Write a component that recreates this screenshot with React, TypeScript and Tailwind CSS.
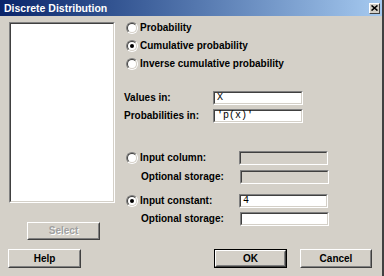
import React from 'react';

const FACE = 'bg-[#d4d0c8]';
const FONT = { fontFamily: '"Liberation Sans", Arial, sans-serif' };

function Sunken({ className = '', disabled = false, children }: { className?: string; disabled?: boolean; children?: React.ReactNode }) {
  return (
    <div className={`border border-t-[#808080] border-l-[#808080] border-b-white border-r-white ${className}`}>
      <div
        className={`h-full border border-t-[#404040] border-l-[#404040] border-b-[#d4d0c8] border-r-[#d4d0c8] ${disabled ? FACE : 'bg-white'} flex items-center pl-[2px] text-[10px] leading-none text-black`}
        style={{ fontFamily: '"Liberation Mono", "Courier New", monospace' }}
      >
        {children}
      </div>
    </div>
  );
}

function Button({ label, className = '', disabled = false, isDefault = false }: { label: string; className?: string; disabled?: boolean; isDefault?: boolean }) {
  const inner = (
    <div className="h-full border border-t-white border-l-white border-b-[#404040] border-r-[#404040]">
      <div className="h-full border border-t-[#d4d0c8] border-l-[#d4d0c8] border-b-[#808080] border-r-[#808080] flex items-center justify-center">
        <span
          className={`text-[10px] font-bold leading-none ${disabled ? 'text-[#a0a0a0] [text-shadow:1px_1px_0_#fff]' : 'text-black'}`}
          style={FONT}
        >
          {label}
        </span>
      </div>
    </div>
  );
  return isDefault ? <div className={`border border-black ${className}`}>{inner}</div> : <div className={className}>{inner}</div>;
}

function Radio({ checked = false }: { checked?: boolean }) {
  return (
    <div className="w-[12px] h-[12px] rounded-full border border-t-[#808080] border-l-[#808080] border-b-white border-r-white shrink-0">
      <div className="w-full h-full rounded-full border border-t-[#404040] border-l-[#404040] border-b-[#d4d0c8] border-r-[#d4d0c8] bg-white flex items-center justify-center">
        {checked && <div className="w-[4px] h-[4px] rounded-full bg-black" />}
      </div>
    </div>
  );
}

function Label({ children, className = '' }: { children: React.ReactNode; className?: string }) {
  return (
    <span className={`text-[10px] font-bold leading-none text-black whitespace-nowrap ${className}`} style={FONT}>
      {children}
    </span>
  );
}

export default function App() {
  return (
    <div className={`w-[384px] h-[276px] ${FACE} flex flex-col border-r-2 border-r-[#404040] overflow-hidden`}>
      {/* Title bar */}
      <div className="h-[16px] flex items-center justify-between bg-gradient-to-r from-[#0a246a] to-[#a6caf0] pl-[4px] pr-[2px] shrink-0">
        <span className="text-[10.5px] font-bold text-white leading-none" style={FONT}>
          Discrete Distribution
        </span>
        <div className={`w-[11px] h-[11px] ${FACE} border border-t-white border-l-white border-b-[#404040] border-r-[#404040] flex items-center justify-center`}>
          <svg width="7" height="6" viewBox="0 0 7 6">
            <path d="M0.5 0.5 L6.5 5.5 M6.5 0.5 L0.5 5.5" stroke="#000" strokeWidth="1.6" />
          </svg>
        </div>
      </div>

      <div className="flex pt-[3px]">
        {/* Left column */}
        <div className="flex flex-col pl-[9px] w-[126px]">
          <Sunken className="w-[106px] h-[181px] mt-[3px]" />
          <Button label="Select" disabled className="w-[73px] h-[18px] ml-[18px] mt-[19px]" />
        </div>

        {/* Right column */}
        <div className="flex flex-col">
          {[
            ['Probability', false],
            ['Cumulative probability', true],
            ['Inverse cumulative probability', false],
          ].map(([t, c]) => (
            <div key={t as string} className="h-[18px] flex items-center gap-[2px]">
              <Radio checked={c as boolean} />
              <Label>{t as string}</Label>
            </div>
          ))}

          <div className="h-[14px] mt-[18px] flex items-center">
            <Label className="w-[89px] -ml-[2px]">Values in:</Label>
            <Sunken className="w-[90px] h-[14px]">X</Sunken>
          </div>
          <div className="h-[14px] mt-[4px] flex items-center">
            <Label className="w-[89px] -ml-[2px]">Probabilities in:</Label>
            <Sunken className="w-[90px] h-[14px]">'p(x)'</Sunken>
          </div>

          <div className="h-[14px] mt-[28px] flex items-center">
            <Radio />
            <Label className="w-[99px] ml-[2px]">Input column:</Label>
            <Sunken disabled className="w-[89px] h-[14px]" />
          </div>
          <div className="h-[14px] mt-[5px] flex items-center">
            <Label className="w-[99px] ml-[15px]">Optional storage:</Label>
            <Sunken disabled className="w-[89px] h-[14px]" />
          </div>
          <div className="h-[14px] mt-[10px] flex items-center">
            <Radio checked />
            <Label className="w-[99px] ml-[2px]">Input constant:</Label>
            <Sunken className="w-[89px] h-[14px]">4</Sunken>
          </div>
          <div className="h-[14px] mt-[4px] flex items-center">
            <Label className="w-[99px] ml-[15px]">Optional storage:</Label>
            <Sunken className="w-[89px] h-[14px]" />
          </div>
        </div>
      </div>

      {/* Bottom buttons */}
      <div className="flex items-center mt-[9px] pl-[8px]">
        <Button label="Help" className="w-[73px] h-[19px]" />
        <Button label="OK" isDefault className="w-[73px] h-[19px] ml-[133px]" />
        <Button label="Cancel" className="w-[72px] h-[19px] ml-[13px]" />
      </div>
    </div>
  );
}
